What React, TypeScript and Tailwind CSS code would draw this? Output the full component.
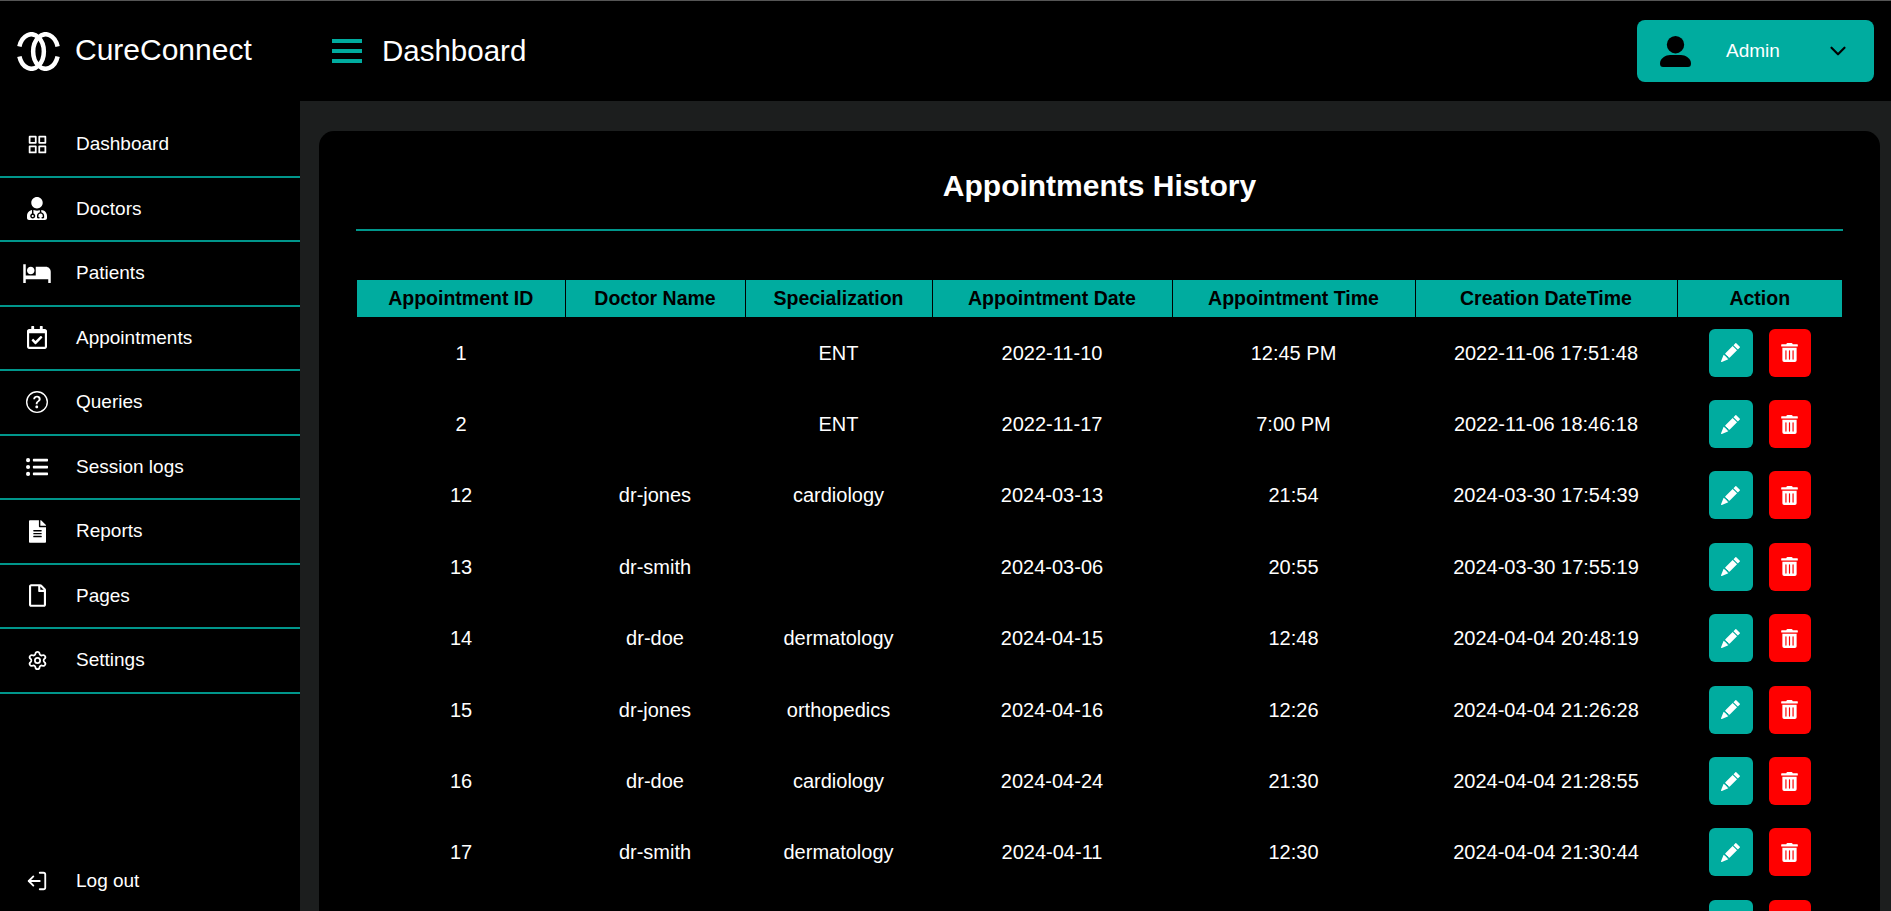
import React from 'react';
import { ChevronDown, LogOut, Settings } from 'lucide-react';
import { FaFileAlt, FaListUl, FaRegCalendarCheck, FaRegFile, FaTrashAlt, FaUserMd } from 'react-icons/fa';
import { FiGrid } from 'react-icons/fi';
import { BsPencilFill, BsQuestionCircle } from 'react-icons/bs';
import { MdHotel } from 'react-icons/md';

const navItems = [
  { label: 'Dashboard', icon: <FiGrid className="w-[21px] h-[21px]" /> },
  { label: 'Doctors', icon: <FaUserMd className="w-[20px] h-[23px]" /> },
  { label: 'Patients', icon: <MdHotel className="w-[30px] h-[30px]" /> },
  { label: 'Appointments', icon: <FaRegCalendarCheck className="w-[20px] h-[23px]" /> },
  { label: 'Queries', icon: <BsQuestionCircle className="w-[22px] h-[22px]" /> },
  { label: 'Session logs', icon: <FaListUl className="w-[22px] h-[22px]" /> },
  { label: 'Reports', icon: <FaFileAlt className="w-[17px] h-[23px]" /> },
  { label: 'Pages', icon: <FaRegFile className="w-[17px] h-[23px]" /> },
  { label: 'Settings', icon: <Settings className="w-[21px] h-[21px]" strokeWidth={2} /> },
];

const columns = [
  { title: 'Appointment ID', width: 'w-[208px]' },
  { title: 'Doctor Name', width: 'w-[180px]' },
  { title: 'Specialization', width: 'w-[187px]' },
  { title: 'Appointment Date', width: 'w-[240px]' },
  { title: 'Appointment Time', width: 'w-[243px]' },
  { title: 'Creation DateTime', width: 'w-[262px]' },
  { title: 'Action', width: 'w-[165px]' },
];

const rows = [
  ['1', '', 'ENT', '2022-11-10', '12:45 PM', '2022-11-06 17:51:48'],
  ['2', '', 'ENT', '2022-11-17', '7:00 PM', '2022-11-06 18:46:18'],
  ['12', 'dr-jones', 'cardiology', '2024-03-13', '21:54', '2024-03-30 17:54:39'],
  ['13', 'dr-smith', '', '2024-03-06', '20:55', '2024-03-30 17:55:19'],
  ['14', 'dr-doe', 'dermatology', '2024-04-15', '12:48', '2024-04-04 20:48:19'],
  ['15', 'dr-jones', 'orthopedics', '2024-04-16', '12:26', '2024-04-04 21:26:28'],
  ['16', 'dr-doe', 'cardiology', '2024-04-24', '21:30', '2024-04-04 21:28:55'],
  ['17', 'dr-smith', 'dermatology', '2024-04-11', '12:30', '2024-04-04 21:30:44'],
  ['', '', '', '', '', ''],
];

function Logo() {
  return (
    <svg viewBox="0 0 43 39" className="w-[43px] h-[39px]" fill="none" stroke="white" strokeWidth="4.5">
      <path d="M2.4 14.5A12.5 17.2 0 1 1 2.4 24.5" />
      <path d="M40.6 14.5A12.5 17.2 0 1 0 40.6 24.5" />
    </svg>
  );
}

function UserIcon() {
  return (
    <svg viewBox="0 0 31 31" className="w-[31px] h-[31px]" fill="black">
      <circle cx="15.5" cy="8.7" r="8.7" />
      <path d="M0 27.5C0 22 6 19 10 19H21C25 19 31 22 31 27.5C31 30 30 31 28 31H3C1 31 0 30 0 27.5Z" />
    </svg>
  );
}

export default function App() {
  return (
    <div className="h-screen flex flex-col overflow-hidden bg-black text-white font-['Liberation_Sans',Arial,sans-serif] border-t border-[#555555]">
      {/* Header */}
      <header className="h-[100px] shrink-0 flex items-center">
        <div className="w-[300px] shrink-0 flex items-center pl-[17px] gap-[15px]">
          <Logo />
          <span className="text-[30px] pb-[3px]">CureConnect</span>
        </div>
        <div className="flex-1 flex items-center pl-[32px] pr-[17px]">
          <div className="w-[30px] flex flex-col gap-[6px]">
            <div className="h-[4px] bg-[#00ac9f]"></div>
            <div className="h-[4px] bg-[#00ac9f]"></div>
            <div className="h-[4px] bg-[#00ac9f]"></div>
          </div>
          <h1 className="ml-[20px] text-[29.5px] pt-[1px]">Dashboard</h1>
          <div className="ml-auto w-[237px] h-[62px] rounded-lg bg-[#00ac9f] flex items-center pl-[23px] pr-[23px]">
            <UserIcon />
            <span className="ml-[35px] text-[19px]">Admin</span>
            <ChevronDown className="ml-auto w-[26px] h-[26px] text-black" strokeWidth={2} />
          </div>
        </div>
      </header>

      <div className="flex-1 flex min-h-0">
        {/* Sidebar */}
        <aside className="w-[300px] shrink-0 flex flex-col pt-[12px] pb-[16px]">
          {navItems.map((item) => (
            <div key={item.label} className="h-[64.5px] flex items-center border-b-2 border-[#00968b]">
              <div className="w-[74px] shrink-0 flex justify-center">{item.icon}</div>
              <span className="ml-[2px] text-[19px]">{item.label}</span>
            </div>
          ))}
          <div className="mt-auto flex items-center">
            <div className="w-[74px] shrink-0 flex justify-center">
              <LogOut className="w-[22px] h-[22px] -scale-x-100" strokeWidth={2} />
            </div>
            <span className="ml-[2px] text-[19px]">Log out</span>
          </div>
        </aside>

        {/* Main */}
        <main className="flex-1 min-w-0 bg-[#1c1e1e] pl-[19px] pr-[11px] pt-[30px] overflow-hidden">
          <div className="bg-black rounded-t-[15px] px-[37px] h-[900px]">
            <h2 className="h-[100px] pt-[11px] flex items-center justify-center text-[30px] font-bold border-b-2 border-[#00968b]">
              Appointments History
            </h2>
            <table className="mt-[49px] mx-[1px] table-fixed border-collapse w-[1485px]">
              <colgroup>
                {columns.map((col) => (
                  <col key={col.title} className={col.width} />
                ))}
              </colgroup>
              <thead>
                <tr className="h-[37px] bg-[#00ac9f] text-black">
                  {columns.map((col, i) => (
                    <th key={col.title} className={i < columns.length - 1 ? 'text-[19.5px] font-bold border-r border-black p-0' : 'text-[19.5px] font-bold p-0'}>
                      {col.title}
                    </th>
                  ))}
                </tr>
              </thead>
              <tbody>
                {rows.map((row, r) => (
                  <tr key={r} className="h-[71.4px]">
                    {row.map((cell, c) => (
                      <td key={c} className="text-center text-[20px] p-0">{cell}</td>
                    ))}
                    <td className="p-0">
                      <div className="flex justify-center gap-[16px]">
                        <button className="w-[44px] h-[48px] rounded-md bg-[#00ac9f] flex items-center justify-center">
                          <BsPencilFill className="w-[19px] h-[19px] text-white" />
                        </button>
                        <button className="w-[42px] h-[48px] rounded-md bg-[#ff0000] flex items-center justify-center">
                          <FaTrashAlt className="w-[17px] h-[19px] text-white" />
                        </button>
                      </div>
                    </td>
                  </tr>
                ))}
              </tbody>
            </table>
          </div>
        </main>
      </div>
    </div>
  );
}
